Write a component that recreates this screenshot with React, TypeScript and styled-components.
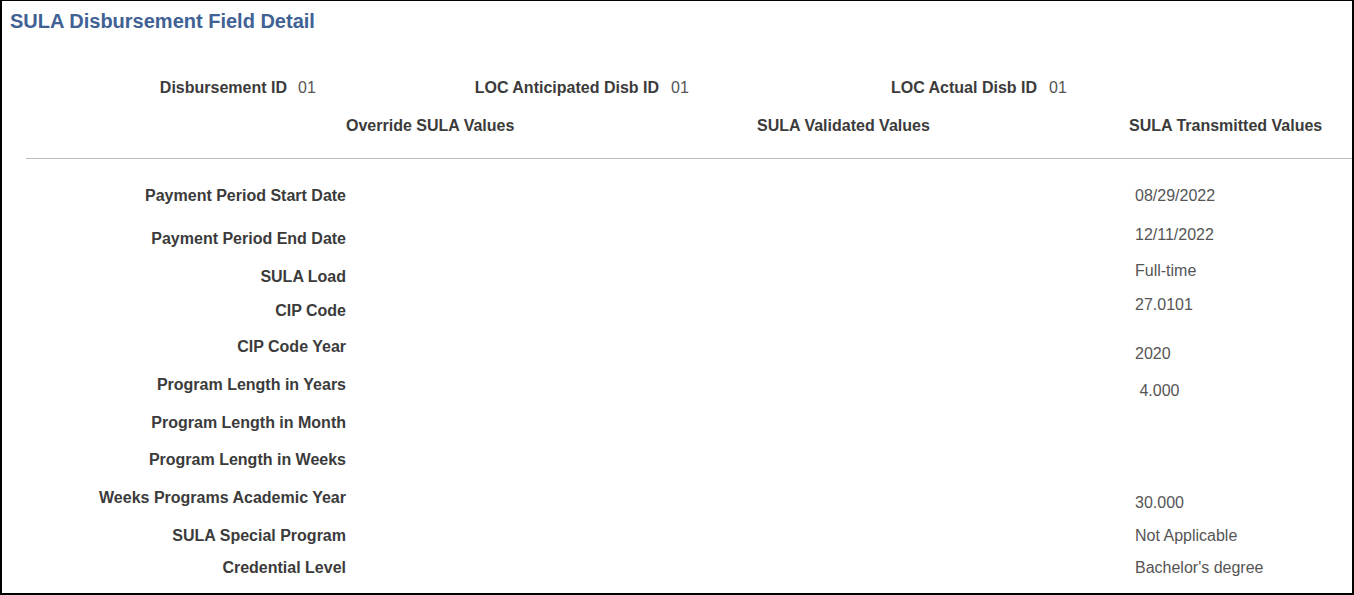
import { Fragment } from "react";
import styled, { createGlobalStyle } from "styled-components";

const GlobalStyle = createGlobalStyle`
  html, body {
    margin: 0;
    padding: 0;
    background: #ffffff;
  }
  * {
    box-sizing: border-box;
  }
`;

const Page = styled.div`
  width: 1354px;
  height: 595px;
  overflow: hidden;
  border-style: solid;
  border-color: #000000;
  border-width: 1px 2px 2px 2px;
  padding: 8px 0 0 8px;
  font-family: "Liberation Sans", Arial, sans-serif;
  background: #ffffff;
`;

const Title = styled.h1`
  margin: 0;
  font-size: 20px;
  line-height: 24px;
  font-weight: 700;
  color: #3f6194;
`;

const KeyRow = styled.div`
  display: grid;
  grid-template-columns: 277px 50px 322px 50px 328px 50px;
  margin-top: 45px;
  line-height: 20px;
  font-size: 16px;
`;

const Label = styled.div`
  font-weight: 700;
  color: #3b3b3b;
  text-align: right;
  white-space: nowrap;
`;

const KeyValue = styled.div<{ $pad: number }>`
  color: #555555;
  padding-left: ${(p) => p.$pad}px;
`;

// column template shared by the header and the detail rows
const columns = "336px 411px 372px 1fr";

const ColumnHeads = styled.div`
  display: grid;
  grid-template-columns: ${columns};
  margin-top: 18px;
  font-size: 16px;
  line-height: 20px;
  font-weight: 700;
  color: #3b3b3b;
`;

const Divider = styled.hr`
  margin: 22px 0 0 16px;
  border: none;
  border-top: 1px solid #bdbdbd;
  height: 0;
`;

const Body = styled.div`
  padding-top: 27px;
`;

const Row = styled.div<{ $h: number }>`
  display: grid;
  grid-template-columns: ${columns};
  align-items: start;
  height: ${(p) => p.$h}px;
  font-size: 16px;
  line-height: 20px;
`;

const Cell = styled.div``;

const Value = styled.div<{ $dy: number }>`
  grid-column: 4;
  color: #555555;
  padding-left: 6px;
  white-space: pre;
  margin-top: ${(p) => p.$dy}px;
`;

const keys = [
  { label: "Disbursement ID", value: "01", pad: 11 },
  { label: "LOC Anticipated Disb ID", value: "01", pad: 12 },
  { label: "LOC Actual Disb ID", value: "01", pad: 12 },
];

const rows = [
  { label: "Payment Period Start Date", value: "08/29/2022", h: 43, dy: 0 },
  { label: "Payment Period End Date", value: "12/11/2022", h: 38, dy: -4 },
  { label: "SULA Load", value: "Full-time", h: 34, dy: -6 },
  { label: "CIP Code", value: "27.0101", h: 36, dy: -6 },
  { label: "CIP Code Year", value: "2020", h: 38, dy: 7 },
  { label: "Program Length in Years", value: " 4.000", h: 38, dy: 6 },
  { label: "Program Length in Month", value: "", h: 37, dy: 0 },
  { label: "Program Length in Weeks", value: "", h: 38, dy: 0 },
  { label: "Weeks Programs Academic Year", value: "30.000", h: 38, dy: 5 },
  { label: "SULA Special Program", value: "Not Applicable", h: 32, dy: 0 },
  { label: "Credential Level", value: "Bachelor's degree", h: 20, dy: 0 },
];

export default function App() {
  return (
    <>
      <GlobalStyle />
      <Page>
        <Title>SULA Disbursement Field Detail</Title>
        <KeyRow>
          {keys.map((k) => (
            <Fragment key={k.label}>
              <Label>{k.label}</Label>
              <KeyValue $pad={k.pad}>{k.value}</KeyValue>
            </Fragment>
          ))}
        </KeyRow>
        <ColumnHeads>
          <Cell />
          <Cell>Override SULA Values</Cell>
          <Cell>SULA Validated Values</Cell>
          <Cell>SULA Transmitted Values</Cell>
        </ColumnHeads>
        <Divider />
        <Body>
          {rows.map((r) => (
            <Row key={r.label} $h={r.h}>
              <Label>{r.label}</Label>
              <Value $dy={r.dy}>{r.value}</Value>
            </Row>
          ))}
        </Body>
      </Page>
    </>
  );
}
